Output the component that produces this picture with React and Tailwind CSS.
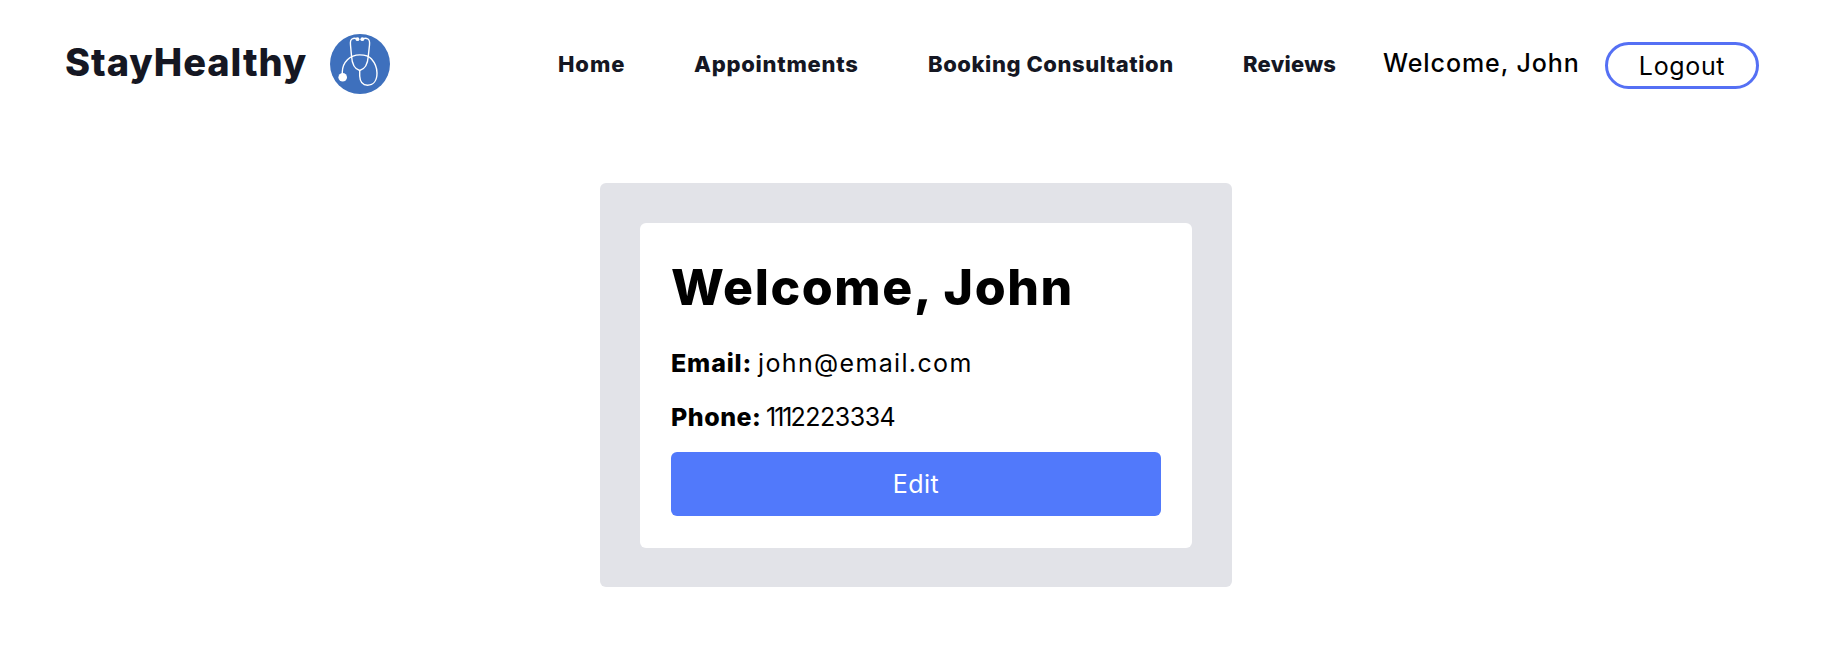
const links = [
  { label: "Home", cls: "w-[136px] tracking-[0.9px]" },
  { label: "Appointments", cls: "w-[234px] tracking-[0.75px]" },
  { label: "Booking Consultation", cls: "w-[315px] tracking-[0.55px]" },
  { label: "Reviews", cls: "w-[140px] tracking-[0.25px]" },
];

function Stethoscope() {
  return (
    <svg
      className="size-[60px] shrink-0"
      viewBox="0 0 60 60"
      fill="none"
      stroke="#fff"
      strokeWidth="1.4"
      strokeLinecap="round"
      strokeLinejoin="round"
    >
      <circle cx="30" cy="30" r="30" fill="#3e70bd" stroke="none" />
      <path d="M27 4.700C25.500 4.200 23.500 4.200 22 5C20.300 6 20.200 8 20.500 11L21.500 22C22 29.500 24.500 35.200 29.700 36.500C35 35.200 37.800 29.500 38.300 22L39.500 11C39.800 8 39.600 6 38 5C36.500 4.200 34.500 4.200 33 4.700" />
      <circle cx="27.500" cy="5.200" r="1.900" fill="#fff" stroke="none" />
      <circle cx="32.300" cy="5.200" r="1.900" fill="#fff" stroke="none" />
      <path d="M12.300 40V38C12.500 28 20 20.900 29.700 20.900C35 20.900 39 22 41.500 25C45 29 47 33 47 39C47 46.500 43.500 51.200 37.500 51.200C32 51.200 30 47.500 29.700 42V36.500" />
      <circle cx="12.700" cy="43.300" r="4.300" fill="#fff" stroke="none" />
    </svg>
  );
}

function Header() {
  return (
    <header className="flex h-[127px] items-center pl-[65px]">
      <span className="w-[265px] pb-[3px] text-[38px] leading-[48px] font-extrabold tracking-[0.95px] text-[#151723]">
        StayHealthy
      </span>
      <Stethoscope />
      <nav className="ml-[168px] flex pt-px">
        {links.map((link) => (
          <a
            key={link.label}
            href="#"
            className={`text-[22px] leading-8 font-extrabold whitespace-nowrap text-[#151723] ${link.cls}`}
          >
            {link.label}
          </a>
        ))}
      </nav>
      <span className="w-[222px] pb-px text-[25px] leading-9 font-medium tracking-[0.92px]">
        Welcome, John
      </span>
      <button className="mt-1 h-[47px] w-[154px] rounded-full border-3 border-[#5570f4] text-[25px] leading-9 tracking-[0.65px]">
        Logout
      </button>
    </header>
  );
}

export default function App() {
  return (
    <div className="h-[672px] bg-white font-['Inter',sans-serif] text-black">
      <Header />
      <main className="mx-auto mt-14 h-[404px] w-[632px] rounded-md bg-[#e2e3e8] p-10">
        <section className="h-[325px] rounded-md bg-white px-[31px] pt-[31px]">
          <h1 className="text-[50px] leading-[66px] font-extrabold tracking-[1.6px]">
            Welcome, John
          </h1>
          <p className="mt-[25px] flex text-[25px] leading-9">
            <b className="w-[87px] font-extrabold tracking-[0.85px]">Email:</b>
            <span className="tracking-[1.35px]">john@email.com</span>
          </p>
          <p className="mt-[18px] flex text-[25px] leading-9">
            <b className="w-[95px] font-extrabold tracking-[0.5px]">Phone:</b>
            <span className="tracking-[-0.5px]">
              <span className="tracking-[-2px]">111</span>2223334
            </span>
          </p>
          <button className="mt-[17px] h-16 w-full rounded-md bg-[#5179fb] text-[25px] leading-9 tracking-[0.45px] text-white">
            Edit
          </button>
        </section>
      </main>
    </div>
  );
}
